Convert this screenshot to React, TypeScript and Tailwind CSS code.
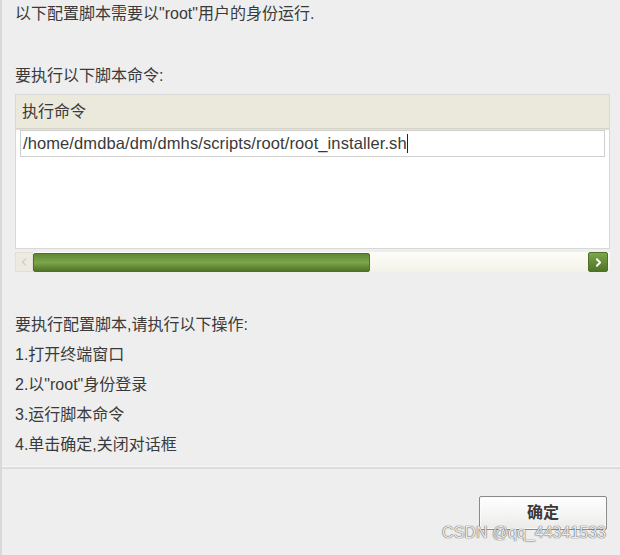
import { ChevronLeft, ChevronRight } from "lucide-react";

const steps = ["1.打开终端窗口", "2.以\"root\"身份登录", "3.运行脚本命令", "4.单击确定,关闭对话框"];

export default function App() {
  return (
    <div className="relative w-[620px] h-[555px] bg-[#eeeeee] border-l-2 border-[#d9d9d9] flex flex-col text-[16px] text-[#3a3a3a] font-['Liberation_Sans','Noto_Sans_CJK_SC',sans-serif]">
      {/* content panel */}
      <div className="h-[469px] pl-[13px] pr-[8px] border-b-2 border-[#dcdcdc] shadow-[inset_0_-1px_0_#f7f7f7]">
        <p className="mt-[4px] leading-[20px]">以下配置脚本需要以"root"用户的身份运行.</p>
        <p className="mt-[42px] leading-[20px]">要执行以下脚本命令:</p>

        <div className="mt-[8px] w-[595px] h-[155px] bg-white border border-[#d8d8d8]">
          <div className="h-[34px] px-[6px] flex items-center bg-[#ebe9dc] border-b border-[#d6d4c6] shadow-[0_1px_1px_#e4e2d6]">
            执行命令
          </div>
          <div className="mt-[1px] mx-[4px] h-[27px] border border-[#cfcfcf] flex items-center px-[2px] text-[16.5px] tracking-[0.1px]">
            <span>/home/dmdba/dm/dmhs/scripts/root/root_installer.sh</span>
            <span className="w-px h-[19px] bg-[#222]" />
          </div>
        </div>

        {/* horizontal scrollbar */}
        <div className="mt-[3px] w-[595px] h-[20px] flex items-center bg-gradient-to-b from-[#fdfdf9] to-[#f3f2e9]">
          <div className="w-[18px] h-[20px] flex items-center justify-center bg-[#eceae1] border border-[#e2e0d6]">
            <ChevronLeft size={12} strokeWidth={3} className="text-[#d4d2c8]" />
          </div>
          <div className="w-[337px] h-[19px] rounded-[2px] border border-[#4e7127] bg-gradient-to-b from-[#5f8835] via-[#7ca64c] to-[#4f7426]" />
          <div className="flex-1" />
          <div className="mr-[2px] w-[20px] h-[20px] rounded-[2px] flex items-center justify-center border border-[#4e7127] bg-gradient-to-b from-[#7ca64c] to-[#4f7426]">
            <ChevronRight size={13} strokeWidth={3.5} className="text-white" />
          </div>
        </div>

        <div className="mt-[38px] leading-[30px]">
          <p>要执行配置脚本,请执行以下操作:</p>
          {steps.map((s) => (
            <p key={s}>{s}</p>
          ))}
        </div>
      </div>

      {/* button bar */}
      <div className="flex justify-end pr-[13px] pt-[27px]">
        <button className="w-[128px] h-[34px] border border-[#8a8a8a] rounded-[2px] bg-gradient-to-b from-white to-[#ecebea] shadow-[inset_0_0_0_1px_#fafafa] font-bold text-[16px] text-[#3a3a3a]">
          确定
        </button>
      </div>

      <span className="absolute right-[14px] top-[523px] text-[16px] leading-[20px] text-[#ececec] font-['Liberation_Sans',sans-serif] [text-shadow:0_0_1px_#555,0_0_1px_#555]">
        CSDN @qq_44341533
      </span>
    </div>
  );
}
